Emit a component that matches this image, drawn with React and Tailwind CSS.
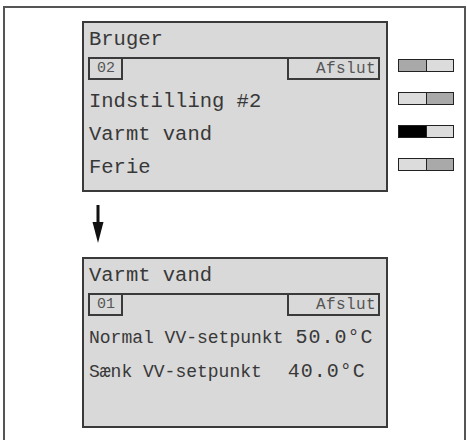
const mono = "font-['Liberation_Mono',monospace]";

const Bar = ({ num }) => (
  <div className="ml-[4px] flex h-[23px] w-[292px] border-t-2 border-[#3a3a3a]">
    <div className="flex w-[35px] items-center border-x-2 border-b-2 border-[#3a3a3a] pl-[7px] text-[15px] leading-none text-[#555]">
      {num}
    </div>
    <div className="flex-1" />
    <div className="flex w-[93px] items-center justify-end border-x-2 border-b-2 border-[#3a3a3a] pr-[2px] text-[16px] leading-none tracking-[0.4px] text-[#555]">
      Afslut
    </div>
  </div>
);

const Panel = ({ title, num, children }) => (
  <div className={`h-[171px] w-[306px] shrink-0 border-2 border-[#3a3a3a] bg-[#d9d9d9] text-[#383838] ${mono}`}>
    <div className="h-[34px] pl-[5px] text-[20.5px] leading-[34px]">{title}</div>
    <Bar num={num} />
    <div className="mt-[5px] pl-[5px]">{children}</div>
  </div>
);

const Indicator = ({ left, right }) => (
  <div className="flex h-[13px] w-[56px] border-[1.5px] border-[#222]">
    <div className={`w-[28px] border-r-[1.5px] border-[#222] ${left}`} />
    <div className={`flex-1 ${right}`} />
  </div>
);

export default function App() {
  return (
    <div className="h-[440px] w-[467px] overflow-hidden bg-white pl-[3px] pt-[6px]">
      <div className="h-[440px] w-[463px] border-2 border-b-0 border-[#555] pl-[77px] pt-[13px]">
        {/* TOP PANEL + INDICATORS */}
        <div className="flex items-start">
          <Panel title="Bruger" num="02">
            <div className="h-[33px] text-[20.5px] leading-[33px]">Indstilling #2</div>
            <div className="h-[33px] text-[20.5px] leading-[33px]">Varmt vand</div>
            <div className="h-[33px] text-[20.5px] leading-[33px]">Ferie</div>
          </Panel>

          <div className="ml-[10px] flex flex-col gap-[20px] pt-[38px]">
            <Indicator left="bg-[#a9a9a9]" right="bg-[#dcdcdc]" />
            <Indicator left="bg-[#dcdcdc]" right="bg-[#a9a9a9]" />
            <Indicator left="bg-black" right="bg-[#dcdcdc]" />
            <Indicator left="bg-[#dcdcdc]" right="bg-[#a9a9a9]" />
          </div>
        </div>

        {/* ARROW */}
        <svg className="ml-[10px] mt-[13px] block" width="12" height="38" viewBox="0 0 12 38">
          <rect x="4.5" y="0" width="3" height="20" fill="#111" />
          <polygon points="0.5,17 11.5,17 6,38" fill="#111" />
        </svg>

        {/* BOTTOM PANEL */}
        <div className="mt-[14px]">
          <Panel title="Varmt vand" num="01">
            <div className="flex h-[34px] items-baseline whitespace-pre leading-[34px]">
              <span className="text-[18px]">Normal VV-setpunkt</span>
              <span className="ml-[12px] text-[20px] tracking-[1px]">50.0°C</span>
            </div>
            <div className="flex h-[34px] items-baseline whitespace-pre leading-[34px]">
              <span className="text-[18px]">Sænk VV-setpunkt</span>
              <span className="ml-[26px] text-[20px] tracking-[1px]">40.0°C</span>
            </div>
          </Panel>
        </div>
      </div>
    </div>
  );
}
